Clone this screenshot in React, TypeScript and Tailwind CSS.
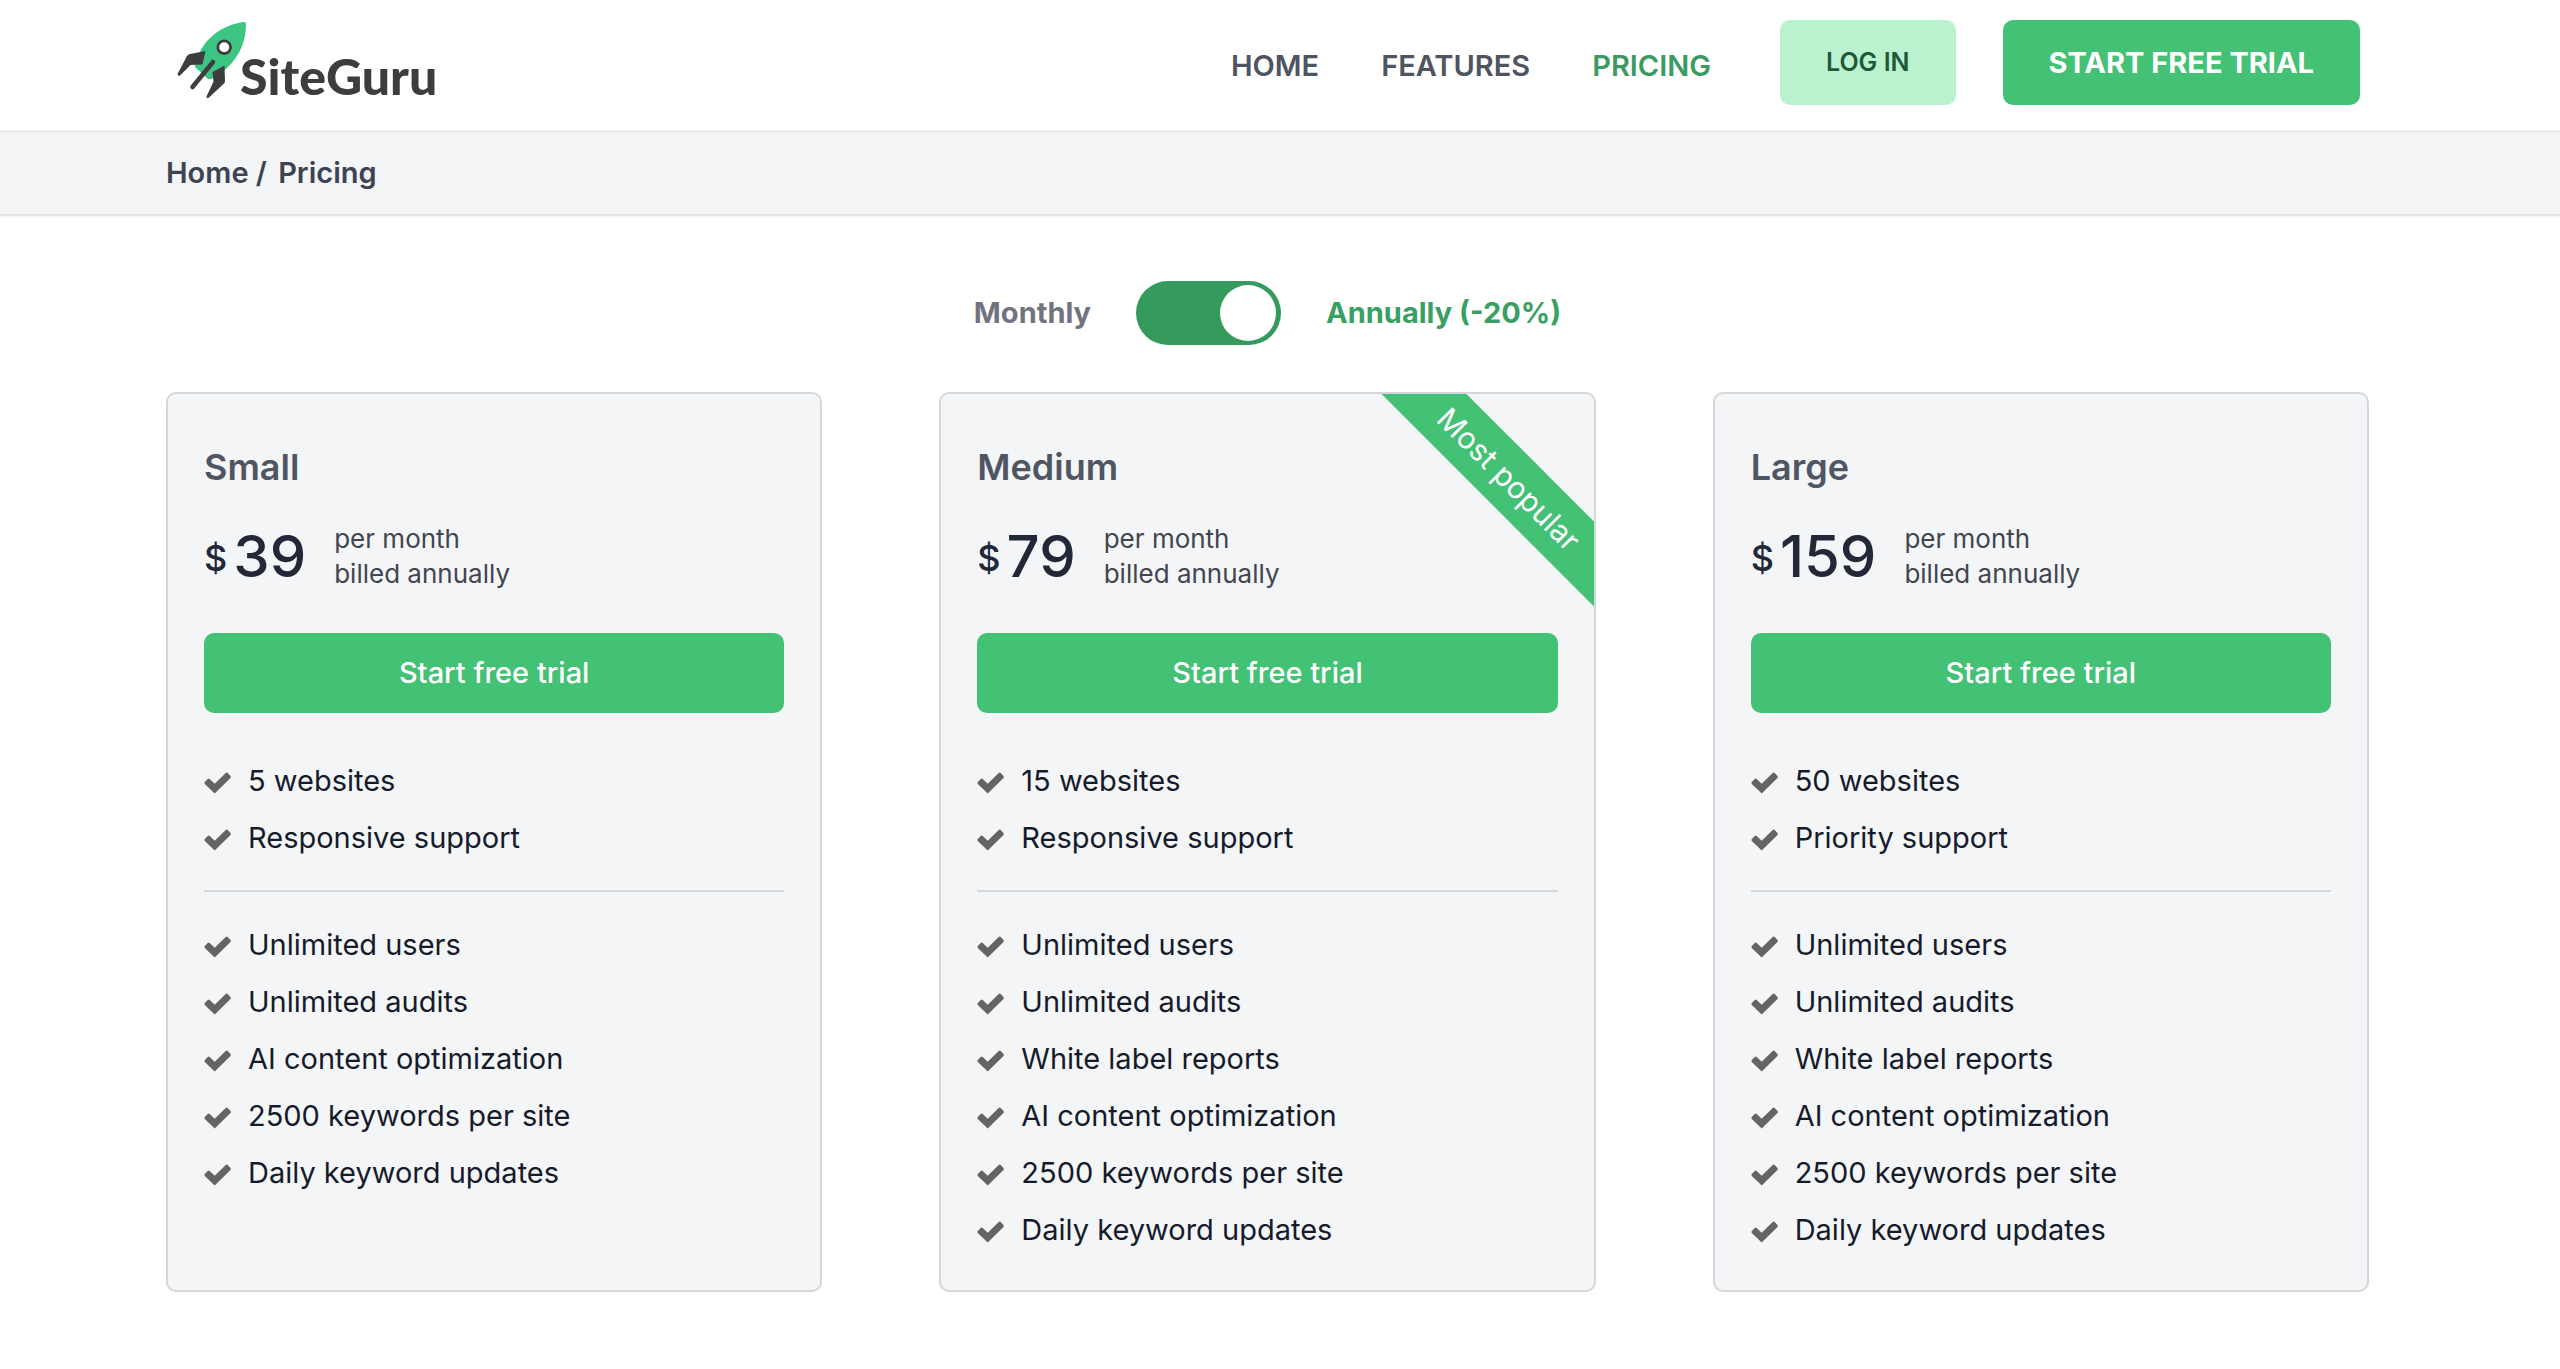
import { useState } from 'react';

const plans = [
    {
        name: 'Small',
        price: 39,
        popular: false,
        limits: ['5 websites', 'Responsive support'],
        features: [
            'Unlimited users',
            'Unlimited audits',
            'AI content optimization',
            '2500 keywords per site',
            'Daily keyword updates'
        ]
    },
    {
        name: 'Medium',
        price: 79,
        popular: true,
        limits: ['15 websites', 'Responsive support'],
        features: [
            'Unlimited users',
            'Unlimited audits',
            'White label reports',
            'AI content optimization',
            '2500 keywords per site',
            'Daily keyword updates'
        ]
    },
    {
        name: 'Large',
        price: 159,
        popular: false,
        limits: ['50 websites', 'Priority support'],
        features: [
            'Unlimited users',
            'Unlimited audits',
            'White label reports',
            'AI content optimization',
            '2500 keywords per site',
            'Daily keyword updates'
        ]
    }
];

function Logo() {
    return (
        <a href="#" className="flex items-end pl-[10px] text-[#3d3d3d]">
            <svg viewBox="0 0 72 80" className="h-20 w-[72px]" aria-hidden="true">
                <path d="M67 2Q70 1.500 70 4C70 20 65 35 50 49L38 57Q36 60 32 59L20 48Q18 46 20 43C25 22 42 6 67 2Z" fill="#3dc583" />
                <circle cx="48.200" cy="27.200" r="7.500" fill="#fff" />
                <circle cx="48.200" cy="27.200" r="6.400" fill="none" stroke="#3d3d3d" strokeWidth="2.800" />
                <path d="M37 42L16.500 67" stroke="#3d3d3d" strokeWidth="4.500" strokeLinecap="round" />
                <path d="M29.500 31L26.500 44.500L14.500 45L4 55.500Q1.500 56.500 1.500 54L11 36Q12 34.500 14 34Z" fill="#3d3d3d" />
                <path d="M48.500 45.500L49 61Q49 62.500 48 63.500L33 77.500Q30.500 79 30.500 76.500L37.500 61.500L36.500 52Z" fill="#3d3d3d" />
            </svg>
            <span className="-ml-2 font-['Lato',sans-serif] text-[50px] leading-[48px] font-black">SiteGuru</span>
        </a>
    );
}

function CheckIcon() {
    return (
        <svg viewBox="0 0 28 22" className="mt-1 h-[22px] w-7 shrink-0" fill="#646464" aria-hidden="true">
            <path d="M10.700 21.500L0.800 12Q0 11 0.800 10L3.700 6.900Q4.700 6.200 5.700 6.900L10.700 11.800L21.700 0.900Q22.700 0.200 23.700 0.900L26.500 3.900Q27.200 4.900 26.500 5.900Z" />
        </svg>
    );
}

function FeatureList({ items }: { items: string[] }) {
    return (
        <ul className="flex flex-col">
            {items.map((item) => (
                <li key={item} className="flex items-center gap-4 text-[29px] leading-[57px] text-[#161b2b]">
                    <CheckIcon />
                    {item}
                </li>
            ))}
        </ul>
    );
}

export default function App() {
    const [annually, setAnnually] = useState(true);

    return (
        <div className="min-h-screen bg-white font-['Inter',sans-serif]">
            <header className="flex items-start justify-between pt-5 pr-[200px] pb-5 pl-[166px]">
                <Logo />
                <nav className="flex items-start text-[29px] leading-[85px] font-semibold">
                    <div className="mr-[69px] flex gap-[62px] leading-[91px] text-[#4f5461]">
                        <a href="#">HOME</a>
                        <a href="#">FEATURES</a>
                        <a href="#" className="text-[#3a9a62]">PRICING</a>
                    </div>
                    <a href="#" className="mr-[47px] rounded-[10px] bg-[#baf2d0] px-[46px] text-[25px] text-[#22583a]">LOG IN</a>
                    <a href="#" className="rounded-[10px] bg-[#43c174] px-[46px] font-bold text-white">START FREE TRIAL</a>
                </nav>
            </header>

            {/* Breadcrumb */}
            <div className="border-y border-[#e0e3e6] bg-[#f3f5f7] pl-[166px] text-[29px] leading-[82px] font-semibold text-[#3e4353] shadow-sm">
                <a href="#">Home</a> / <a href="#" className="ml-1">Pricing</a>
            </div>

            <main className="pt-[66px] pr-[191px] pb-[76px] pl-[166px]">
                {/* Billing period */}
                <div className="flex items-center justify-center gap-[45px] text-[29px] leading-[64px] font-bold">
                    <span className="text-[#71747f]">Monthly</span>
                    <label className="relative flex">
                        <input
                            type="checkbox"
                            aria-label="Bill annually"
                            checked={annually}
                            onChange={(e) => setAnnually(e.target.checked)}
                            className="peer h-16 w-[145px] appearance-none rounded-full bg-gray-400 checked:bg-[#349b5c]"
                        />
                        <span className="pointer-events-none absolute top-1 left-1 size-14 rounded-full bg-white peer-checked:left-[84px]" />
                    </label>
                    <span className="text-[#3a9f63]">Annually (-20%)</span>
                </div>

                {/* Plans */}
                <div className="mt-[47px] grid grid-cols-3 gap-[117px]">
                    {plans.map((plan) => (
                        <section
                            key={plan.name}
                            className="relative overflow-hidden rounded-[10px] border-2 border-[#d5d8db] bg-[#f3f5f7] px-9 pt-[45px] pb-8"
                        >
                            {plan.popular && (
                                <div className="absolute top-[55px] -right-[75px] w-80 rotate-45 bg-[#43c174] text-center text-[30px] leading-[60px] text-white">
                                    Most popular
                                </div>
                            )}
                            <h2 className="text-[36px] leading-[56px] font-semibold text-[#505563]">{plan.name}</h2>
                            <div className="mt-6 flex items-center font-medium text-[#222838]">
                                <span className="mr-1.5 pt-1 text-[36px] leading-[70px]">$</span>
                                <span className="mr-7 text-[58px] leading-[70px]">{plan.price}</span>
                                <p className="text-[26px] leading-[35px] font-normal text-[#42454f]">
                                    per month
                                    <br />
                                    billed annually
                                </p>
                            </div>
                            <button className="mt-10 mb-[39px] block h-20 w-full rounded-[10px] bg-[#43c174] text-[29px] font-medium text-white">
                                Start free trial
                            </button>
                            <FeatureList items={plan.limits} />
                            <hr className="my-6 border-t-2 border-[#d5d8db]" />
                            <FeatureList items={plan.features} />
                        </section>
                    ))}
                </div>
            </main>
        </div>
    );
}
